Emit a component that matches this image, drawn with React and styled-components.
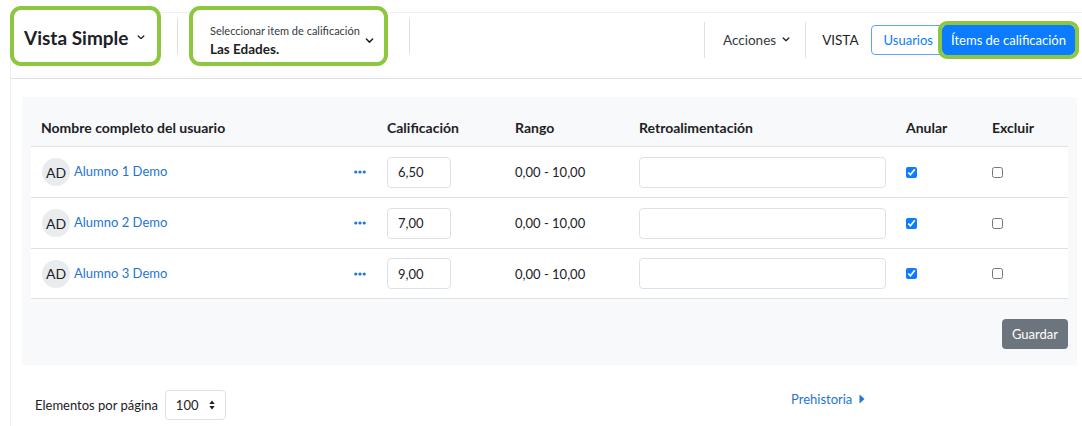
import React from "react";
import styled, { createGlobalStyle } from "styled-components";

const GlobalStyle = createGlobalStyle`
  html, body { margin: 0; padding: 0; background: #fff; }
  body {
    font-family: Lato, "Noto Sans", sans-serif;
    font-size: 13px;
    color: #1d2125;
    padding-top: 12px;
  }
`;

const GREEN = "#8dc63f";
const BLUE = "#0b7bff";
const LINK = "#1f74d4";

const Frame = styled.div`
  margin-left: 10px;
  border-left: 1px solid #eceef0;
  border-top: 1px solid #eff1f3;
  min-height: 420px;
`;

const Toolbar = styled.div`
  display: flex;
  align-items: center;
  height: 66px;
  box-sizing: border-box;
  padding: 0 7px 20px 3px;
  border-bottom: 1px solid #dee2e6;
`;

const Highlight = styled.div`
  outline: 4px solid ${GREEN};
  outline-offset: 0;
  border-radius: 7px;
  background: #fff;
`;

const ViewPicker = styled(Highlight)`
  display: flex;
  align-items: center;
  width: 143px;
  height: 52px;
  box-sizing: border-box;
  padding: 3px 0 0 10px;
  font-size: 19px;
  font-weight: 700;
  gap: 9px;
`;

const ItemPicker = styled(Highlight)`
  position: relative;
  width: 191px;
  height: 52px;
  box-sizing: border-box;
  padding: 14px 0 0 17px;
`;

const PickerLabel = styled.div`
  font-size: 11px;
  line-height: 14px;
  color: #343a40;
`;

const PickerValue = styled.div`
  font-size: 13.5px;
  font-weight: 700;
  line-height: 18px;
  margin-top: 2px;
`;

const PickerChevron = styled.span`
  position: absolute;
  right: 10px;
  top: 28px;
  display: flex;
`;

const Divider = styled.div`
  width: 1px;
  height: 36px;
  background: #dee2e6;
  margin: ${(p) => p.$m || "0"};
`;

const Right = styled.div`
  margin-left: auto;
  display: flex;
  align-items: center;
  margin-top: 8px;
`;

const Menu = styled.div`
  display: flex;
  align-items: center;
  gap: 6px;
  color: #343a40;
  margin: 0 15px 0 18px;
  font-size: 13.5px;
`;

const ViewLabel = styled.div`
  margin: 0 12px 0 16px;
  color: #1d2125;
  font-size: 13.5px;
`;

const ToggleBtn = styled.button`
  font-family: inherit;
  font-size: 13px;
  height: 30px;
  box-sizing: border-box;
  padding: 0 ${(p) => (p.$active ? 8 : 12)}px;
  border: 1px solid ${(p) => (p.$active ? BLUE : "#5aa3ff")};
  background: ${(p) => (p.$active ? BLUE : "#fff")};
  color: ${(p) => (p.$active ? "#fff" : BLUE)};
  border-radius: 4px 0 0 4px;
  margin-right: ${(p) => (p.$active ? 0 : -4)}px;
  ${(p) => p.$active && `outline: 4px solid ${GREEN}; border-radius: 5px; position: relative;`}
`;

const Panel = styled.div`
  margin: 18px 5px 0 11px;
  background: #f8f9fa;
  padding: 0 9px 16px 9px;
`;

const cols = "346px 128px 124px 267px 86px 86px";

const HeadRow = styled.div`
  display: grid;
  grid-template-columns: ${cols};
  align-items: end;
  height: 49px;
  box-sizing: border-box;
  padding-bottom: 10px;
  font-weight: 700;
  font-size: 14px;
`;

const Row = styled.div`
  display: grid;
  grid-template-columns: ${cols};
  align-items: center;
  height: 51px;
  box-sizing: border-box;
  background: #fff;
  border-top: 1px solid #dee2e6;
  &:last-child { border-bottom: 1px solid #dee2e6; }
`;

const Cell = styled.div`
  padding: 0 10px;
  display: flex;
  align-items: center;
`;

const NameCell = styled(Cell)`
  padding-right: 11px;
`;

const Avatar = styled.span`
  width: 28px;
  height: 28px;
  border-radius: 50%;
  background: #e9ecef;
  display: flex;
  align-items: center;
  justify-content: center;
  margin: 0 4px 0 1px;
  font-size: 14px;
  flex: none;
`;

const UserLink = styled.a`
  color: ${LINK};
  text-decoration: none;
  margin-top: -2px;
`;

const Dots = styled.span`
  margin-left: auto;
  display: flex;
`;

const Field = styled.input`
  width: ${(p) => p.$w}px;
  height: 31px;
  box-sizing: border-box;
  border: 1px solid #dee2e6;
  border-radius: 4px;
  padding: 0 10px;
  font-family: inherit;
  font-size: 13px;
  color: #1d2125;
  background: #fff;
`;

const Check = styled.input.attrs({ type: "checkbox", readOnly: true })`
  width: 11px;
  height: 11px;
  margin: 0;
  accent-color: ${BLUE};
`;

const Actions = styled.div`
  display: flex;
  justify-content: flex-end;
  margin-top: 20px;
`;

const SaveBtn = styled.button`
  font-family: inherit;
  font-size: 13px;
  height: 30px;
  padding: 0 10px;
  border: none;
  border-radius: 4px;
  background: #6c757d;
  color: #fff;
`;

const Footer = styled.div`
  display: grid;
  grid-template-columns: 756px auto;
  padding-left: 24px;
  margin-top: 25px;
`;

const PerPage = styled.div`
  display: flex;
  align-items: center;
  gap: 7px;
`;

const Select = styled.div`
  width: 61px;
  height: 30px;
  box-sizing: border-box;
  border: 1px solid #dee2e6;
  border-radius: 4px;
  display: flex;
  align-items: center;
  justify-content: space-between;
  padding: 0 10px;
`;

const NextLink = styled.a`
  color: ${LINK};
  text-decoration: none;
  display: flex;
  align-items: center;
  gap: 7px;
  margin-top: 1px;
  align-self: start;
`;

const Chevron = ({ size = 8 }) => (
  <svg width={size} height={size * 0.6} viewBox="0 0 10 6" fill="none">
    <path d="M1.5 1.2 5 4.6 8.5 1.2" stroke="#1d2125" strokeWidth="1.6" strokeLinecap="round" strokeLinejoin="round" />
  </svg>
);

const Ellipsis = () => (
  <svg width="12" height="4" viewBox="0 0 12 4">
    <circle cx="1.8" cy="2" r="1.6" fill={LINK} />
    <circle cx="6" cy="2" r="1.6" fill={LINK} />
    <circle cx="10.2" cy="2" r="1.6" fill={LINK} />
  </svg>
);

const SortIcon = () => (
  <svg width="6" height="10" viewBox="0 0 6 10">
    <path d="M3 0.5 5.7 4H0.3z M3 9.5 0.3 6h5.4z" fill="#1d2125" />
  </svg>
);

const CaretRight = () => (
  <svg width="6" height="10" viewBox="0 0 6 10">
    <path d="M0.5 0.5 5.5 5 0.5 9.5z" fill={LINK} />
  </svg>
);

const students = [
  { name: "Alumno 1 Demo", grade: "6,50" },
  { name: "Alumno 2 Demo", grade: "7,00" },
  { name: "Alumno 3 Demo", grade: "9,00" },
];

export default function App() {
  return (
    <>
      <GlobalStyle />
      <Frame>
        <Toolbar>
          <ViewPicker>
            Vista Simple <Chevron size={8} />
          </ViewPicker>
          <Divider $m="0 15px 0 20px" />
          <ItemPicker>
            <PickerLabel>Seleccionar item de calificación</PickerLabel>
            <PickerValue>Las Edades.</PickerValue>
            <PickerChevron>
              <Chevron size={9} />
            </PickerChevron>
          </ItemPicker>
          <Divider $m="0 0 0 25px" />
          <Right>
            <Divider />
            <Menu>
              Acciones <Chevron size={8} />
            </Menu>
            <Divider />
            <ViewLabel>VISTA</ViewLabel>
            <ToggleBtn>Usuarios</ToggleBtn>
            <ToggleBtn $active>Ítems de calificación</ToggleBtn>
          </Right>
        </Toolbar>

        <Panel>
          <HeadRow>
            <Cell>Nombre completo del usuario</Cell>
            <Cell>Calificación</Cell>
            <Cell>Rango</Cell>
            <Cell>Retroalimentación</Cell>
            <Cell>Anular</Cell>
            <Cell>Excluir</Cell>
          </HeadRow>
          <div>
            {students.map((s) => (
              <Row key={s.name}>
                <NameCell>
                  <Avatar>AD</Avatar>
                  <UserLink href="#">{s.name}</UserLink>
                  <Dots>
                    <Ellipsis />
                  </Dots>
                </NameCell>
                <Cell>
                  <Field $w={64} defaultValue={s.grade} />
                </Cell>
                <Cell>0,00 - 10,00</Cell>
                <Cell>
                  <Field $w={247} defaultValue="" />
                </Cell>
                <Cell>
                  <Check defaultChecked />
                </Cell>
                <Cell>
                  <Check />
                </Cell>
              </Row>
            ))}
          </div>
          <Actions>
            <SaveBtn>Guardar</SaveBtn>
          </Actions>
        </Panel>

        <Footer>
          <PerPage>
            Elementos por página
            <Select>
              100 <SortIcon />
            </Select>
          </PerPage>
          <NextLink href="#">
            Prehistoria <CaretRight />
          </NextLink>
        </Footer>
      </Frame>
    </>
  );
}
